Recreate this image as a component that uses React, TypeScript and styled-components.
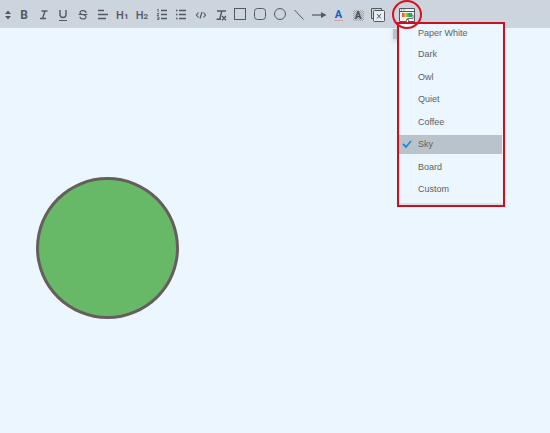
import React from 'react';
import styled, { createGlobalStyle } from 'styled-components';

const ink = '#57585d';

const GlobalStyle = createGlobalStyle`
  * { box-sizing: border-box; }
  body {
    margin: 0;
    background: #ebf6ff;
    color: ${ink};
    font-family: "Liberation Sans", Arial, sans-serif;
  }
`;

const Page = styled.div`
  min-height: 100vh;
  background: #ebf6ff;
`;

const Toolbar = styled.div`
  display: flex;
  align-items: center;
  height: 28px;
  background: #ccd4dd;
`;

const ToolGroup = styled.div`
  display: flex;
  justify-content: space-between;
  flex: 0 1 372px;
`;

const ToolButton = styled.button<{ $narrow?: boolean }>`
  display: flex;
  align-items: center;
  justify-content: center;
  flex: none;
  width: ${(p) => (p.$narrow ? 15 : 18)}px;
  height: 28px;
  padding: 0;
  border: 0;
  background: transparent;
  color: ${ink};
  font: bold 11px Roboto, "Liberation Sans", sans-serif;
`;

const Icon = styled.svg`
  display: block;
  flex: none;
  width: 16px;
  height: 16px;
  fill: none;
  stroke: ${ink};
  stroke-width: 1.2;
`;

const Letter = styled.span`
  padding-top: 2px;
  font-size: 12px;
`;

const Heading = styled.span`
  display: flex;
  align-items: baseline;
  padding-top: 2px;
  font-weight: 500;
  small { font-size: 8px; font-weight: 700; }
`;

const ColorLetter = styled.span`
  margin-top: 2px;
  border-bottom: 1px solid #d9a3ae;
  padding: 0 1px;
  color: #1560c8;
  line-height: 11px;
`;

const ShadedLetter = styled.span`
  width: 11px;
  margin-top: 2px;
  line-height: 11px;
  font-size: 10px;
  text-align: center;
  color: #4a4b50;
  background: repeating-conic-gradient(#a0a6ad 0 25%, #ccd4dd 0 50%) 0 0 / 2px 2px;
`;

const ThemePicker = styled.div`
  position: relative;
  display: flex;
  margin-left: 11px;
`;

const ThemeButton = styled(ToolButton)`
  width: 18px;
  padding-top: 2px;
  svg { width: 18px; height: 18px; }
`;

const HighlightRing = styled.span`
  position: absolute;
  left: -6px;
  top: 0;
  z-index: 2;
  width: 30px;
  height: 29px;
  border: 2px solid #d9101f;
  border-radius: 50%;
  pointer-events: none;
`;

const MenuTab = styled.span`
  position: absolute;
  left: -5px;
  top: 29px;
  width: 6px;
  height: 10px;
  background: #b9c0c7;
  box-shadow: 0 2px 4px #c8d0d8;
`;

const Menu = styled.div`
  position: absolute;
  left: -1px;
  top: 22px;
  z-index: 1;
  width: 108px;
  height: 185px;
  border: 2px solid #c9101f;
  background: #dde1e8;
`;

const MenuList = styled.div`
  display: flex;
  flex-direction: column;
  justify-content: space-between;
  height: 179px;
  padding-bottom: 4px;
  background: #ebf6ff;
`;

const MenuItem = styled.button<{ $active?: boolean }>`
  display: grid;
  grid-template-columns: 19px 1fr;
  align-items: center;
  height: 19px;
  margin-right: 1px;
  padding: 0;
  border: 0;
  background: ${(p) => (p.$active ? '#bac3ca' : 'transparent')};
  color: #5d5f63;
  font: 9px "Liberation Sans", Arial, sans-serif;
  text-align: left;
  &:first-child { height: 17px; }
`;

const Check = styled.svg`
  display: block;
  width: 10px;
  height: 10px;
  margin-left: 3px;
  fill: none;
  stroke: #2387d9;
  stroke-width: 1.8;
`;

const Canvas = styled.main`
  padding: 149px 36px 0;
`;

const Ellipse = styled.div`
  width: 143px;
  height: 142px;
  border: 3px solid #665d5d;
  border-radius: 50%;
  background: #67b968;
`;

const tools: { label: string; art: React.ReactNode }[] = [
  { label: 'Bold', art: <Letter>B</Letter> },
  { label: 'Italic', art: <Icon viewBox="0 0 16 16"><path d="M5.5 5h6M4 12.500h6M9 5l-2.500 7.500" strokeWidth="1.4" /></Icon> },
  { label: 'Underline', art: <Icon viewBox="0 0 16 16"><path d="M5 4v4.500a3 3 0 0 0 6 0V4" strokeWidth="1.400" /><path d="M4 14.500h8" strokeWidth="1" /></Icon> },
  { label: 'Strikethrough', art: <Icon viewBox="0 0 16 16"><path d="M11 7c0-3.200-6-3.200-6-.3C5 9.500 11 8 11 10.700 11 13.800 5 13.600 5 10.800M3.500 8.500h9" /></Icon> },
  { label: 'Align', art: <Icon viewBox="0 0 16 16"><path d="M3 4.500h6M3 8.500h10M3 12.500h8" strokeWidth="1.400" /></Icon> },
  { label: 'Heading 1', art: <Heading>H<small>1</small></Heading> },
  { label: 'Heading 2', art: <Heading>H<small>2</small></Heading> },
  { label: 'Numbered list', art: <Icon viewBox="0 0 16 16"><path d="M7 4.500h6M7 8.500h6M7 12.500h6" strokeWidth="1.400" /><path d="M3 3.500h1.200v2.500M3 7.500h2l-2 2h2M3 11h2v2.500H3M3.500 12.300H5" strokeWidth=".8" /></Icon> },
  { label: 'Bulleted list', art: <Icon viewBox="0 0 16 16"><path d="M6 4.500h7M6 8.500h7M6 12.500h7M3 4.500h1.500M3 8.500h1.500M3 12.500h1.500" strokeWidth="1.400" /></Icon> },
  { label: 'Code', art: <Icon viewBox="0 0 16 16"><path d="M5.500 6.500L3.500 9l2 2.500M10.500 6.500l2 2.500-2 2.500M9 6l-2 6.500" /></Icon> },
  { label: 'Clear formatting', art: <Icon viewBox="0 0 16 16"><path d="M4 5h9M8.800 5l-2 8M3.500 13.300h4.500M9 10l4 4.300M13 10l-4 4.300" strokeWidth="1.400" /></Icon> },
  { label: 'Rectangle', art: <Icon viewBox="0 0 16 16"><rect x="2.5" y="2.5" width="11" height="11" strokeWidth="1" /></Icon> },
  { label: 'Rounded rectangle', art: <Icon viewBox="0 0 16 16"><rect x="2.5" y="2.5" width="11" height="11" rx="3" strokeWidth="1" /></Icon> },
  { label: 'Ellipse', art: <Icon viewBox="0 0 16 16"><circle cx="8" cy="8" r="5.5" strokeWidth="1" /></Icon> },
  { label: 'Line', art: <Icon viewBox="0 0 16 16"><path d="M3.500 4l9 9.500" strokeWidth="1" /></Icon> },
  { label: 'Arrow', art: <Icon viewBox="0 0 16 16"><path d="M1 9h10" /><path d="M10 6l5.500 3-5.500 3z" fill={ink} stroke="none" /></Icon> },
  { label: 'Font color', art: <ColorLetter>A</ColorLetter> },
  { label: 'Text background', art: <ShadedLetter>A</ShadedLetter> },
  { label: 'Clear style', art: <Icon viewBox="0 0 16 16"><path d="M3.500 12.500h-2v-10h10v2" strokeWidth="1" /><rect x="3.500" y="4.500" width="11" height="11" rx="1" fill="#e8eef4" strokeWidth="1" /><path d="M7 8l4 4.500M11 8l-4 4.500" strokeWidth="1" /></Icon> },
];

const themes = ['Paper White', 'Dark', 'Owl', 'Quiet', 'Coffee', 'Sky', 'Board', 'Custom'];

export default function App() {
  return (
    <Page>
      <GlobalStyle />
      <Toolbar role="toolbar" aria-label="Formatting">
        <ToolButton $narrow aria-label="Font size">
          <Icon viewBox="0 0 16 16"><path d="M5 8l3-3.500L11 8zM5 10l3 3.500 3-3.500z" fill={ink} stroke="none" /></Icon>
        </ToolButton>
        <ToolGroup>
          {tools.map((tool) => (
            <ToolButton key={tool.label} aria-label={tool.label}>{tool.art}</ToolButton>
          ))}
        </ToolGroup>
        <ThemePicker>
          <ThemeButton aria-label="Theme" aria-haspopup="menu" aria-expanded="true">
            <Icon viewBox="0 0 18 18">
              <defs>
                <linearGradient id="paint">
                  <stop offset="0" stopColor="#e5402c" />
                  <stop offset=".35" stopColor="#e8ca25" />
                  <stop offset=".65" stopColor="#31b84b" />
                  <stop offset="1" stopColor="#2c8ba5" />
                </linearGradient>
              </defs>
              <path d="M1.500 2.500h15v13h-15z" fill="#eef3f8" strokeWidth="1" />
              <path d="M1.500 5.500h15M3 4h1M5.500 4h1" strokeWidth="1" />
              <rect x="4" y="7" width="10" height="4" fill="url(#paint)" stroke="none" />
              <path d="M14 9h1v3.500H9.500v1" strokeWidth=".8" />
              <path d="M8.500 13.500h2v4h-2z" fill="#fff" strokeWidth=".8" />
            </Icon>
          </ThemeButton>
          <MenuTab />
          <Menu>
            <MenuList role="menu" aria-label="Theme">
              {themes.map((name) => (
                <MenuItem key={name} role="menuitemradio" aria-checked={name === 'Sky'} $active={name === 'Sky'}>
                  <span>{name === 'Sky' && <Check viewBox="0 0 10 10"><path d="M1 5l3 3 5-6" /></Check>}</span>
                  <span>{name}</span>
                </MenuItem>
              ))}
            </MenuList>
          </Menu>
          <HighlightRing />
        </ThemePicker>
      </Toolbar>
      <Canvas>
        <Ellipse role="img" aria-label="Green circle" />
      </Canvas>
    </Page>
  );
}
